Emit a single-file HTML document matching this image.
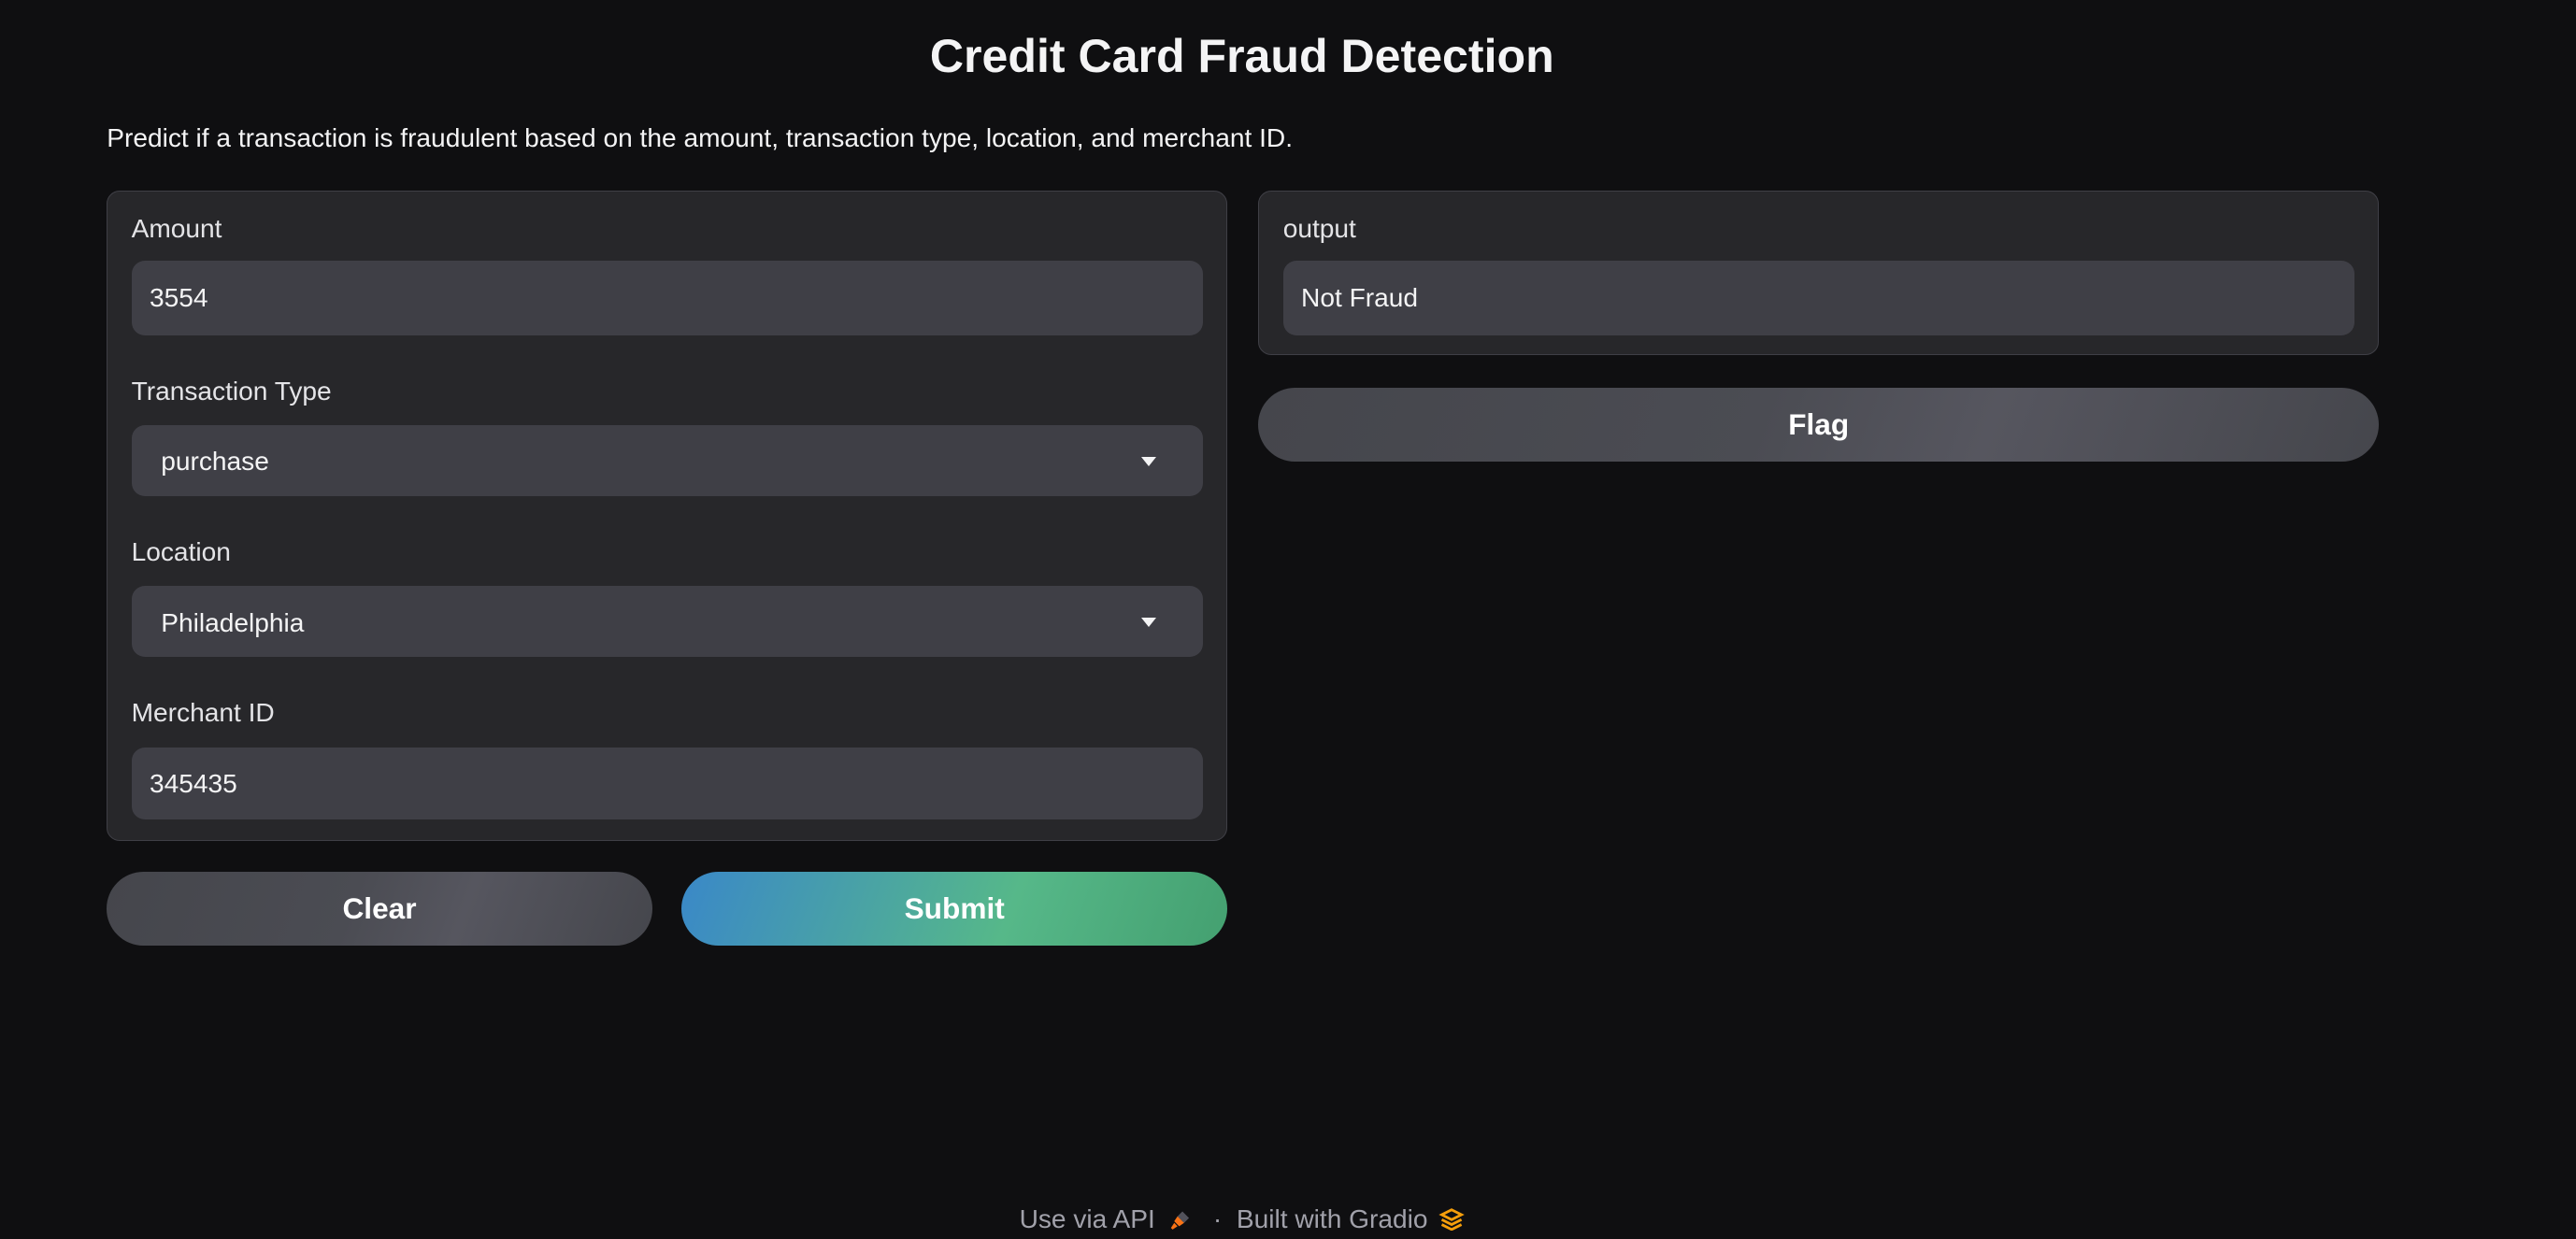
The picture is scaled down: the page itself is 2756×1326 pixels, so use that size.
<!DOCTYPE html>
<html><head><meta charset="utf-8">
<style>
html,body{margin:0;padding:0;background:#0f0f11;width:2756px;height:1326px;overflow:hidden}
#w{zoom:1.75765;position:relative;width:1568px;height:754px;font-family:"Liberation Sans",sans-serif;color:#f4f4f5}
.a{position:absolute}
h1{position:absolute;left:0;width:1512px;top:14px;margin:0;text-align:center;font-size:28.5px;font-weight:bold;line-height:40px}
.desc{left:65px;top:74px;font-size:16px;line-height:20px}
.panel{background:#27272a;border:1px solid #3f3f46;border-radius:8px;box-sizing:border-box}
.lbl{font-size:16px;line-height:20px;color:#e4e4e7}
.inp{background:#3f3f46;border-radius:8px;font-size:16px;line-height:20px;box-sizing:border-box;padding:12px 11px}
.sel{padding-left:18px}
.arr{position:absolute;right:28px;top:19px;width:0;height:0;border-left:5px solid transparent;border-right:5px solid transparent;border-top:6px solid #f4f4f5}
.btn{border-radius:23px;font-weight:bold;font-size:18px;line-height:45px;text-align:center;height:45px;color:#fff}
.gray{background:linear-gradient(110deg,#45464c 0%,#4b4c53 45%,#56565f 65%,#45464c 100%)}
.sub{background:linear-gradient(110deg,#3a88c8 0%,#56b889 60%,#44a070 100%)}
.foot{left:0;width:1512px;text-align:center;top:732px;font-size:16px;line-height:20px;color:#a1a1aa}
</style></head><body><div id="w">
<h1>Credit Card Fraud Detection</h1>
<div class="a desc">Predict if a transaction is fraudulent based on the amount, transaction type, location, and merchant ID.</div>
<div class="a panel" style="left:65px;top:116px;width:682px;height:396px"></div>
<div class="a lbl" style="left:80px;top:129px">Amount</div>
<div class="a inp" style="left:80px;top:159px;width:652px;height:45px">3554</div>
<div class="a lbl" style="left:80px;top:228px">Transaction Type</div>
<div class="a inp sel" style="left:80px;top:259px;width:652px;height:43px">purchase<div class="arr"></div></div>
<div class="a lbl" style="left:80px;top:326px">Location</div>
<div class="a inp sel" style="left:80px;top:357px;width:652px;height:43px">Philadelphia<div class="arr"></div></div>
<div class="a lbl" style="left:80px;top:424px">Merchant ID</div>
<div class="a inp" style="left:80px;top:455px;width:652px;height:44px">345435</div>
<div class="a btn gray" style="left:65px;top:531px;width:332px">Clear</div>
<div class="a btn sub" style="left:415px;top:531px;width:332px">Submit</div>
<div class="a panel" style="left:766px;top:116px;width:682px;height:100px"></div>
<div class="a lbl" style="left:781px;top:129px">output</div>
<div class="a inp" style="left:781px;top:159px;width:652px;height:45px">Not Fraud</div>
<div class="a btn gray" style="left:766px;top:236px;width:682px">Flag</div>
<div class="a foot">Use via API <svg width="14" height="14" viewBox="0 0 14 14" style="vertical-align:-2px;margin:0 4px"><path d="M8 2l4 4-3 3-4-4z" fill="#52525b"/><path d="M5 5l4 4-3 2-3-3z M3 9l-2 3 1 1 3-2" fill="#f97316"/></svg> &nbsp;·&nbsp; Built with Gradio <svg width="16" height="14" viewBox="0 0 16 14" style="vertical-align:-2px;margin-left:2px"><path d="M8 1l6 3-6 3-6-3z M2 7l6 3 6-3 M2 10l6 3 6-3" fill="none" stroke="#f59e0b" stroke-width="1.6"/></svg></div>
</div></body></html>
